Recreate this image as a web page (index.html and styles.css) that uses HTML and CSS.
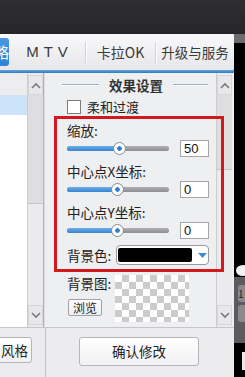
FILE: index.html
```html
<!DOCTYPE html>
<html lang="zh-CN">
<head>
    <meta charset="UTF-8">
    <meta name="viewport" content="width=device-width, initial-scale=1.0">
    <title>效果设置</title>
    <link rel="stylesheet" href="styles.css">
</head>
<body>
    <div class="topbar"></div>
    <div class="main">
        <div class="window">
            <div class="tabs">
                <div class="tab active"><span>略</span></div>
                <div class="tab mtv">M T V</div>
                <div class="sep"></div>
                <div class="tab karaoke">卡拉OK</div>
                <div class="sep"></div>
                <div class="tab upgrade">升级与服务</div>
            </div>
            <div class="tabline"></div>

            <div class="body">
                <div class="list">
                    <div class="list-head"></div>
                    <div class="list-row selected"></div>
                </div>
                <div class="scrollbar">
                    <div class="sb-btn"><svg width="10" height="7" viewBox="0 0 10 7"><polyline points="1,6 5,2 9,6" fill="none" stroke="#7b7b7f" stroke-width="1.6"/></svg></div>
                    <div class="sb-thumb left-thumb"></div>
                    <div class="sb-track"></div>
                    <div class="sb-btn"><svg width="10" height="7" viewBox="0 0 10 7"><polyline points="1,1 5,5 9,1" fill="none" stroke="#7b7b7f" stroke-width="1.6"/></svg></div>
                </div>
                <div class="divider"></div>

                <div class="panel">
                    <div class="panel-title">
                        <span class="rule"></span>
                        <span class="title-text">效果设置</span>
                        <span class="rule short"></span>
                    </div>

                    <div class="check"><span class="box"></span>柔和过渡</div>

                    <div class="group">
                        <div class="label">缩放:</div>
                        <div class="slider-row">
                            <div class="slider">
                                <div class="track"><div class="fill" style="width:52px"></div></div>
                                <div class="thumb" style="left:46px"></div>
                            </div>
                            <div class="num">50</div>
                        </div>
                    </div>

                    <div class="group">
                        <div class="label">中心点X坐标:</div>
                        <div class="slider-row">
                            <div class="slider">
                                <div class="track"><div class="fill" style="width:50px"></div></div>
                                <div class="thumb" style="left:44px"></div>
                            </div>
                            <div class="num">0</div>
                        </div>
                    </div>

                    <div class="group">
                        <div class="label">中心点Y坐标:</div>
                        <div class="slider-row">
                            <div class="slider">
                                <div class="track"><div class="fill" style="width:50px"></div></div>
                                <div class="thumb" style="left:44px"></div>
                            </div>
                            <div class="num">0</div>
                        </div>
                    </div>

                    <div class="color-row">
                        <div class="label wide">背景色:</div>
                        <div class="color-select">
                            <span class="swatch"></span>
                            <svg class="caret" width="9" height="5" viewBox="0 0 9 5"><polygon points="0,0 9,0 4.5,5" fill="#3d8ad6"/></svg>
                        </div>
                    </div>

                    <div class="image-row">
                        <div class="image-side">
                            <div class="label">背景图:</div>
                            <div class="browse">浏览</div>
                        </div>
                        <div class="checker"></div>
                    </div>
                </div>

                <div class="scrollbar">
                    <div class="sb-btn"><svg width="10" height="7" viewBox="0 0 10 7"><polyline points="1,6 5,2 9,6" fill="none" stroke="#7b7b7f" stroke-width="1.6"/></svg></div>
                    <div class="sb-thumb right-thumb"></div>
                    <div class="sb-track"></div>
                    <div class="sb-btn"><svg width="10" height="7" viewBox="0 0 10 7"><polyline points="1,1 5,5 9,1" fill="none" stroke="#7b7b7f" stroke-width="1.6"/></svg></div>
                </div>
            </div>

            <div class="bottom">
                <div class="bottom-left">
                    <div class="btn style-btn">风格</div>
                </div>
                <div class="bottom-right">
                    <div class="btn confirm">确认修改</div>
                </div>
            </div>

            <div class="highlight"></div>
        </div>

        <div class="side">
            <div class="side-cap"></div>
            <div class="side-black"></div>
            <div class="side-knob"><span></span></div>
            <div class="side-gray">
                <div class="side-box">1</div>
                <div class="side-box"></div>
            </div>
            <div class="side-foot"><span></span></div>
        </div>
    </div>
</body>
</html>
```

FILE: styles.css
```css
body {
    margin: 0;
    padding: 0;
    width: 245px;
    height: 377px;
    overflow: hidden;
    font-family: "Noto Sans CJK SC", "Liberation Sans", sans-serif;
    font-size: 13px;
    color: #222;
    background: #000;
}

.topbar {
    height: 34px;
    background: linear-gradient(#2f2e30, #262527);
}

.main {
    display: flex;
    height: 343px;
}

.window {
    position: relative;
    width: 234px;
    display: flex;
    flex-direction: column;
    background: #eeeff1;
}

/* tab bar */
.tabs {
    height: 36px;
    display: flex;
    align-items: center;
    background: linear-gradient(#f8f8fa, #e7e7ea);
}

.tab {
    text-align: center;
    color: #3a3a3c;
    line-height: 20px;
}

.tab.active {
    width: 9px;
    height: 28px;
    overflow: hidden;
    background: linear-gradient(#4798e6, #2f82d6);
    border-radius: 0 3px 3px 0;
    color: #fff;
}

.tab.active span {
    display: block;
    margin-left: -6px;
    font-size: 15px;
    line-height: 28px;
}

.tab.mtv {
    width: 76px;
    font-size: 15px;
    word-spacing: 1px;
    font-family: "Liberation Sans", sans-serif;
}

.tab.karaoke {
    width: 69px;
    font-size: 14px;
}

.tab.upgrade {
    flex: 1;
    font-size: 13.5px;
}

.sep {
    width: 1px;
    height: 21px;
    background: #d2d2d6;
    box-shadow: 1px 0 0 #fff;
}

.tabline {
    height: 3px;
    background: linear-gradient(#62a4df, #2e7bc3);
}

/* body */
.body {
    height: 254px;
    display: flex;
}

.list {
    width: 27px;
    background: #fff;
}

.list-head {
    height: 22px;
    background: #ededef;
}

.list-row.selected {
    height: 20px;
    background: #cde4f8;
}

.scrollbar {
    width: 16px;
    border-left: 1px solid #cdcdd1;
    background: #ebebed;
    display: flex;
    flex-direction: column;
    padding: 2px 0;
    box-sizing: border-box;
}

.sb-btn {
    height: 20px;
    display: flex;
    align-items: center;
    justify-content: center;
    background: #e8e8eb;
    border: 1px solid #d6d6da;
    box-sizing: border-box;
}

.sb-thumb {
    background: #dedee1;
    border-bottom: 1px solid #c4c4c8;
}

.left-thumb {
    height: 108px;
}

.right-thumb {
    height: 74px;
}

.sb-track {
    flex: 1;
}

.divider {
    width: 2px;
    background: linear-gradient(to right, #b4b4b8 50%, #dcdcdf 50%);
}

/* settings panel */
.panel {
    width: 171px;
    padding-left: 22px;
    box-sizing: border-box;
    overflow: hidden;
    background: #eeeff1;
}

.panel-title {
    height: 22px;
    padding-top: 1px;
    box-sizing: border-box;
    margin-left: -5px;
    display: flex;
    align-items: center;
    gap: 10px;
}

.rule {
    width: 37px;
    height: 1px;
    background: #8fb2d6;
    box-shadow: 0 1px 0 #fff;
}

.rule.short {
    width: 35px;
}

.title-text {
    font-weight: bold;
    font-size: 13.5px;
    line-height: 18px;
    color: #333;
}

.check {
    margin: 5px 0 8px;
    height: 14px;
    display: flex;
    align-items: center;
    gap: 6px;
    line-height: 14px;
}

.box {
    width: 14px;
    height: 14px;
    box-sizing: border-box;
    border: 1px solid #7d7d80;
    background: #fff;
}

.group {
    margin-bottom: 6px;
}

.label {
    font-size: 13.5px;
    line-height: 17px;
    height: 17px;
    white-space: nowrap;
}

.label.wide {
    width: 49px;
}

.slider-row {
    height: 18px;
    display: flex;
    align-items: center;
}

.slider {
    position: relative;
    width: 102px;
    height: 13px;
}

.track {
    margin-top: 4px;
    height: 5px;
    border-radius: 3px;
    background: linear-gradient(#b0b0b3, #8e8e91);
    overflow: hidden;
}

.fill {
    height: 100%;
    background: linear-gradient(#6eaee8, #3683d2);
}

.thumb {
    position: absolute;
    top: 0;
    width: 13px;
    height: 13px;
    box-sizing: border-box;
    border: 1px solid #8c8c90;
    border-radius: 50%;
    background: radial-gradient(circle, #2f7dcf 0 2px, #fdfdfd 2.5px);
}

.num {
    margin-left: 11px;
    width: 29px;
    height: 17px;
    box-sizing: border-box;
    border: 1px solid #a6a6aa;
    background: #fff;
    padding-left: 3px;
    font-family: "Liberation Sans", sans-serif;
    font-size: 13px;
    line-height: 15px;
    color: #111;
}

.color-row {
    margin-top: 4px;
    height: 20px;
    display: flex;
    align-items: center;
}

.color-select {
    width: 93px;
    height: 20px;
    box-sizing: border-box;
    border: 1px solid #9a9a9e;
    border-radius: 4px;
    background: #fff;
    padding: 2px 0 2px 1px;
    display: flex;
    align-items: center;
}

.swatch {
    width: 74px;
    height: 14px;
    border-radius: 2px;
    background: #000;
}

.caret {
    margin-left: 6px;
}

.image-row {
    margin-top: 10px;
    display: flex;
}

.image-side {
    width: 48px;
}

.browse {
    margin: 7px 0 0 1px;
    width: 34px;
    height: 17px;
    box-sizing: border-box;
    border: 1px solid #a2a2a6;
    border-radius: 2px;
    background: linear-gradient(#ffffff, #eeeeef);
    text-align: center;
    font-size: 12px;
    line-height: 15px;
}

.checker {
    width: 74px;
    height: 47px;
    background-color: #fff;
    background-image: conic-gradient(#cbcbcd 25%, #fff 0 50%, #cbcbcd 0 75%, #fff 0);
    background-size: 14px 14px;
}

/* bottom buttons */
.bottom {
    height: 50px;
    display: flex;
    border-top: 1px solid #c6c6ca;
    box-sizing: border-box;
    background: #ececee;
}

.bottom-left {
    width: 45px;
    border-right: 1px solid #c2c2c6;
    overflow: hidden;
}

.btn {
    box-sizing: border-box;
    border: 1px solid #b6b6ba;
    border-radius: 3px;
    background: linear-gradient(#ffffff, #f1f1f3);
    color: #222;
}

.style-btn {
    margin: 9px 0 0 -8px;
    width: 40px;
    height: 26px;
    padding-left: 8px;
    font-size: 13.5px;
    line-height: 24px;
}

.confirm {
    margin: 9px 0 0 33px;
    width: 120px;
    height: 29px;
    text-align: center;
    font-size: 13.5px;
    line-height: 27px;
}

/* annotation box */
.highlight {
    position: absolute;
    left: 54px;
    top: 82px;
    width: 170px;
    height: 156px;
    box-sizing: border-box;
    border: 3px solid #d3191d;
}

/* edge of the next window */
.side {
    width: 11px;
    display: flex;
    flex-direction: column;
    background: #000;
}

.side-cap {
    height: 9px;
    background: #6c6c6e;
}

.side-black {
    height: 222px;
}

.side-knob {
    height: 12px;
    padding-left: 2px;
}

.side-knob span {
    display: block;
    width: 14px;
    height: 11px;
    border-radius: 50%;
    background: #f2f2f2;
}

.side-gray {
    height: 66px;
    background: #5c5c5e;
    padding: 8px 0 0 4px;
    box-sizing: border-box;
}

.side-box {
    height: 17px;
    margin-bottom: 3px;
    border-radius: 3px 0 0 3px;
    background: #8a8a8c;
    color: #222;
    font-size: 10px;
    line-height: 17px;
}

.side-foot {
    flex: 1;
    padding: 9px 0 0 8px;
}

.side-foot span {
    display: block;
    width: 3px;
    height: 18px;
    background: #e8e8e8;
}
```
